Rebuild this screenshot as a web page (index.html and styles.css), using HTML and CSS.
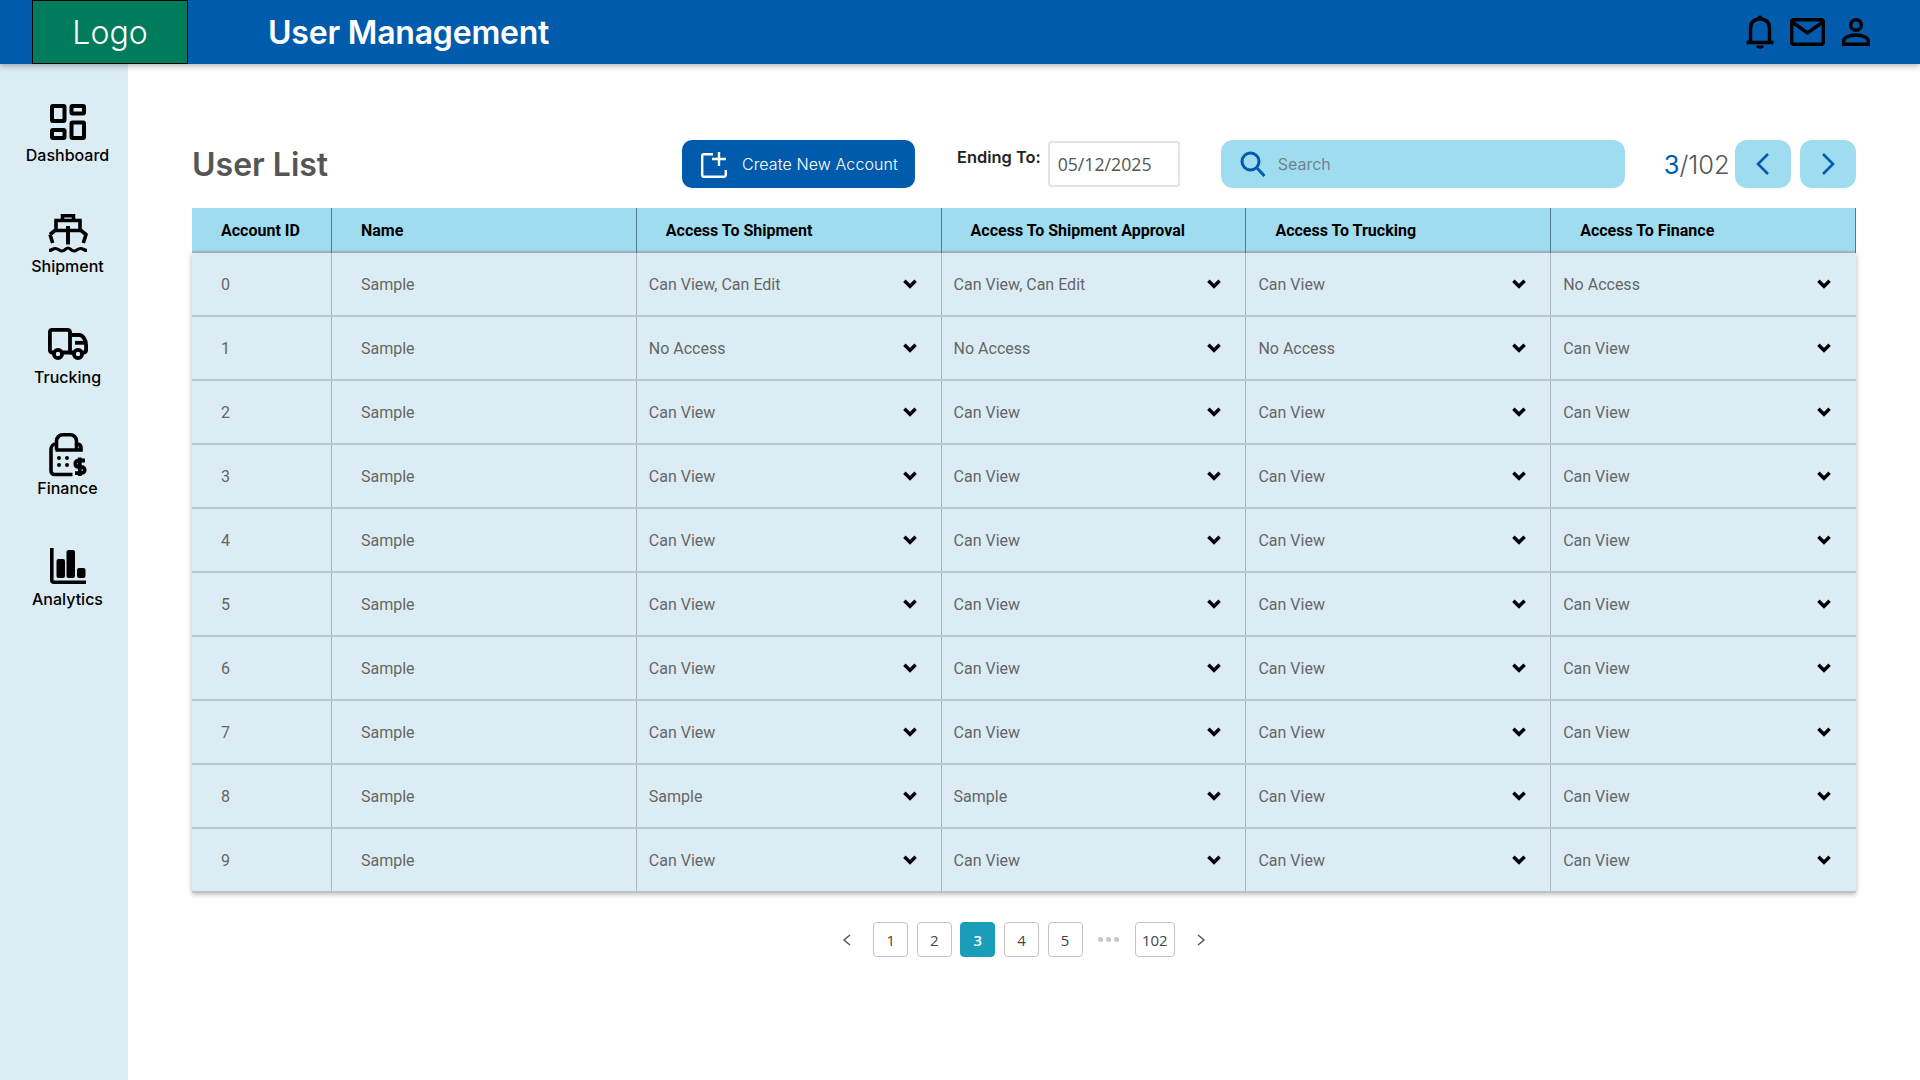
FILE: index.html
```html
<!DOCTYPE html>
<html lang="en">
<head>
<meta charset="utf-8">
<title>User Management</title>
<link rel="stylesheet" href="styles.css">
</head>
<body>
<svg class="defs" width="0" height="0" aria-hidden="true">
  <symbol id="chev" viewBox="0 0 14 10"><path d="M1.400 1.700 7 7.300l5.600-5.600" fill="none" stroke="#000" stroke-width="3.400"/></symbol>
</svg>
<header class="topbar">
  <div class="logo">Logo</div>
  <div class="app-title">User Management</div>
  <div class="top-icons">
    <svg class="i-bell" width="28" height="34" viewBox="0 0 28 34" fill="none" stroke="#000" stroke-width="3.400"><path d="M0.500 27.500h27M4.500 27V14C4.500 7.500 8 4 14 4s9.500 3.500 9.500 10v13"/><circle cx="14" cy="2.500" r="2" fill="#000" stroke="none"/><path d="M10 30.500h8l-1 2.500-3 1-3-1z" fill="#000" stroke="none"/></svg>
    <svg class="i-mail" width="35" height="28" viewBox="0 0 35 28" fill="none" stroke="#000" stroke-width="3.400"><rect x="1.700" y="1.700" width="31.600" height="24.600" rx="2"/><path d="M2 4l15.500 11L33 4"/></svg>
    <svg class="i-user" width="28" height="28" viewBox="0 0 28 28" fill="none" stroke="#000" stroke-width="3.400"><circle cx="14" cy="7" r="5.300"/><path d="M1.700 26.300V23c0-3.500 5.500-6 12.300-6s12.300 2.500 12.300 6v3.300z"/></svg>
  </div>
</header>
<div class="body-wrap">
  <nav class="sidebar">
    <div class="nav-item">
      <div class="nav-icon"><svg width="36" height="36" viewBox="0 0 36 36" fill="none" stroke="#000" stroke-width="4"><rect x="2" y="2" width="12.500" height="15" rx="1"/><rect x="21.500" y="2" width="12.500" height="7.500" rx="1"/><rect x="2" y="26" width="12.500" height="8" rx="1"/><rect x="21.500" y="18.500" width="12.500" height="15.500" rx="1"/></svg></div>
      <span>Dashboard</span>
    </div>
    <div class="nav-item">
      <div class="nav-icon"><svg width="40" height="39" viewBox="0 0 40 39" fill="none" stroke="#000" stroke-width="3.600"><path d="M14.500 6V1.800h11V6"/><path d="M8 16V6.500h24V16"/><path d="M2 20.500 7 16.500h26l5 4-2.700 8.500M2 20.500l2.700 8.500" stroke-linejoin="round"/><path d="M20 12v18.500" stroke-width="4"/><path d="M1 36.500c3 0 3.500-2 6.500-2s3.500 2.500 6.500 2.500 3.500-3 6-3 3 3 6 3 3.500-2.500 6.500-2.500 3.500 2 6.500 2" stroke-width="3.200"/></svg></div>
      <span>Shipment</span>
    </div>
    <div class="nav-item">
      <div class="nav-icon"><svg width="40" height="32" viewBox="0 0 40 32" fill="none" stroke="#000" stroke-width="3.800"><path d="M5.500 24.500H4A2.200 2.200 0 0 1 1.900 22V4A2.200 2.200 0 0 1 4 1.900h15.500A2.500 2.500 0 0 1 22 4v20.500h-7"/><path d="M22 7h9.500c3 0 6.600 5 6.600 10v5a2.200 2.200 0 0 1-2.100 2.500h-1.500M25.500 24.500h-3.500"/><path d="M27 14.800h11"/><circle cx="10" cy="26" r="4.100"/><circle cx="30" cy="26" r="4.100"/></svg></div>
      <span>Trucking</span>
    </div>
    <div class="nav-item">
      <div class="nav-icon"><svg width="38" height="44" viewBox="0 0 38 44" fill="none" stroke="#000" stroke-width="3.600"><path d="M7.500 17V8a6.200 6.200 0 0 1 6.200-6.200h7.600A6.200 6.200 0 0 1 27.500 8v9"/><path d="M6.500 17h25.500v-2a4 4 0 0 0-3-4"/><path d="M7 11a5 5 0 0 0-5 5v22a3.500 3.500 0 0 0 3.500 3.500h18"/><g fill="#000" stroke="none"><circle cx="10" cy="25" r="2"/><circle cx="18" cy="25" r="2"/><circle cx="10" cy="32" r="2"/><circle cx="18" cy="32" r="2"/></g><path d="M36 27.500h-7a3.200 3.200 0 0 0 0 6.300h3.500a3.200 3.200 0 0 1 0 6.400H26M30.800 24.500v18.500" stroke-width="3.800"/></svg></div>
      <span>Finance</span>
    </div>
    <div class="nav-item">
      <div class="nav-icon"><svg width="36" height="36" viewBox="0 0 36 36" fill="none"><path d="M1.800 0v32a2.200 2.200 0 0 0 2.200 2.200h32" stroke="#000" stroke-width="3.600"/><g fill="#000"><rect x="6.500" y="11" width="8.500" height="19" rx="2"/><rect x="16.500" y="2" width="8.500" height="28" rx="2"/><rect x="27" y="20" width="8.500" height="10" rx="2"/></g></svg></div>
      <span>Analytics</span>
    </div>
  </nav>
  <main class="content">
    <div class="toolbar">
      <h1 class="page-title">User List</h1>
      <button class="create-btn">
        <svg width="26" height="28" viewBox="0 0 26 28" fill="none" stroke="#fff" stroke-width="2.400"><path d="M12 4.200H3A1.800 1.800 0 0 0 1.200 6v19A1.800 1.800 0 0 0 3 26.800h20a1.800 1.800 0 0 0 1.800-1.800v-5"/><path d="M18 2v14M11 9h14"/></svg>
        Create New Account
      </button>
      <div class="ending-label">Ending To:</div>
      <div class="date-box">05/12/2025</div>
      <div class="search">
        <svg width="26" height="26" viewBox="0 0 26 26" fill="none" stroke="#005BAC" stroke-width="3"><circle cx="10.500" cy="10.500" r="8.500"/><path d="m16.500 16.500 8 8.500"/></svg>
        <span>Search</span>
      </div>
      <div class="page-count"><b>3</b>/102</div>
      <button class="nav-btn"><svg width="14" height="24" viewBox="0 0 14 24" fill="none" stroke="#005BAC" stroke-width="2.600"><path d="M12 2 2 12l10 10"/></svg></button>
      <button class="nav-btn"><svg width="14" height="24" viewBox="0 0 14 24" fill="none" stroke="#005BAC" stroke-width="2.600"><path d="m2 2 10 10L2 22"/></svg></button>
    </div>
    <div class="table">
      <div class="row head">
        <div class="cell id">Account ID</div>
        <div class="cell name">Name</div>
        <div class="cell name">Access To Shipment</div>
        <div class="cell name">Access To Shipment Approval</div>
        <div class="cell name">Access To Trucking</div>
        <div class="cell name">Access To Finance</div>
      </div>
      <div class="rows">
        <div class="row">
          <div class="cell id">0</div><div class="cell name">Sample</div>
          <div class="cell pick">Can View, Can Edit<svg><use href="#chev"/></svg></div>
          <div class="cell pick">Can View, Can Edit<svg><use href="#chev"/></svg></div>
          <div class="cell pick">Can View<svg><use href="#chev"/></svg></div>
          <div class="cell pick">No Access<svg><use href="#chev"/></svg></div>
        </div>
        <div class="row">
          <div class="cell id">1</div><div class="cell name">Sample</div>
          <div class="cell pick">No Access<svg><use href="#chev"/></svg></div>
          <div class="cell pick">No Access<svg><use href="#chev"/></svg></div>
          <div class="cell pick">No Access<svg><use href="#chev"/></svg></div>
          <div class="cell pick">Can View<svg><use href="#chev"/></svg></div>
        </div>
        <div class="row">
          <div class="cell id">2</div><div class="cell name">Sample</div>
          <div class="cell pick">Can View<svg><use href="#chev"/></svg></div>
          <div class="cell pick">Can View<svg><use href="#chev"/></svg></div>
          <div class="cell pick">Can View<svg><use href="#chev"/></svg></div>
          <div class="cell pick">Can View<svg><use href="#chev"/></svg></div>
        </div>
        <div class="row">
          <div class="cell id">3</div><div class="cell name">Sample</div>
          <div class="cell pick">Can View<svg><use href="#chev"/></svg></div>
          <div class="cell pick">Can View<svg><use href="#chev"/></svg></div>
          <div class="cell pick">Can View<svg><use href="#chev"/></svg></div>
          <div class="cell pick">Can View<svg><use href="#chev"/></svg></div>
        </div>
        <div class="row">
          <div class="cell id">4</div><div class="cell name">Sample</div>
          <div class="cell pick">Can View<svg><use href="#chev"/></svg></div>
          <div class="cell pick">Can View<svg><use href="#chev"/></svg></div>
          <div class="cell pick">Can View<svg><use href="#chev"/></svg></div>
          <div class="cell pick">Can View<svg><use href="#chev"/></svg></div>
        </div>
        <div class="row">
          <div class="cell id">5</div><div class="cell name">Sample</div>
          <div class="cell pick">Can View<svg><use href="#chev"/></svg></div>
          <div class="cell pick">Can View<svg><use href="#chev"/></svg></div>
          <div class="cell pick">Can View<svg><use href="#chev"/></svg></div>
          <div class="cell pick">Can View<svg><use href="#chev"/></svg></div>
        </div>
        <div class="row">
          <div class="cell id">6</div><div class="cell name">Sample</div>
          <div class="cell pick">Can View<svg><use href="#chev"/></svg></div>
          <div class="cell pick">Can View<svg><use href="#chev"/></svg></div>
          <div class="cell pick">Can View<svg><use href="#chev"/></svg></div>
          <div class="cell pick">Can View<svg><use href="#chev"/></svg></div>
        </div>
        <div class="row">
          <div class="cell id">7</div><div class="cell name">Sample</div>
          <div class="cell pick">Can View<svg><use href="#chev"/></svg></div>
          <div class="cell pick">Can View<svg><use href="#chev"/></svg></div>
          <div class="cell pick">Can View<svg><use href="#chev"/></svg></div>
          <div class="cell pick">Can View<svg><use href="#chev"/></svg></div>
        </div>
        <div class="row">
          <div class="cell id">8</div><div class="cell name">Sample</div>
          <div class="cell pick">Sample<svg><use href="#chev"/></svg></div>
          <div class="cell pick">Sample<svg><use href="#chev"/></svg></div>
          <div class="cell pick">Can View<svg><use href="#chev"/></svg></div>
          <div class="cell pick">Can View<svg><use href="#chev"/></svg></div>
        </div>
        <div class="row">
          <div class="cell id">9</div><div class="cell name">Sample</div>
          <div class="cell pick">Can View<svg><use href="#chev"/></svg></div>
          <div class="cell pick">Can View<svg><use href="#chev"/></svg></div>
          <div class="cell pick">Can View<svg><use href="#chev"/></svg></div>
          <div class="cell pick">Can View<svg><use href="#chev"/></svg></div>
        </div>
      </div>
    </div>
    <div class="pager">
      <svg class="pg-arrow" width="10" height="12" viewBox="0 0 10 12" fill="none" stroke="#555" stroke-width="1.500"><path d="M8 1 2 6l6 5"/></svg>
      <div class="pg">1</div>
      <div class="pg">2</div>
      <div class="pg on">3</div>
      <div class="pg">4</div>
      <div class="pg">5</div>
      <div class="pg-dots"><i></i><i></i><i></i></div>
      <div class="pg wide">102</div>
      <svg class="pg-arrow" width="10" height="12" viewBox="0 0 10 12" fill="none" stroke="#555" stroke-width="1.500"><path d="m2 1 6 5-6 5"/></svg>
    </div>
  </main>
</div>
</body>
</html>
```
FILE: styles.css
```css
* { box-sizing: border-box; }
html, body { margin: 0; padding: 0; }
body {
  width: 1920px;
  height: 1080px;
  overflow: hidden;
  background: #fff;
  font-family: Inter, "Liberation Sans", sans-serif;
  font-size: 16px;
  color: #000;
}
.defs { display: block; height: 0; }

.topbar {
  position: relative;
  z-index: 2;
  height: 64px;
  display: flex;
  align-items: center;
  background: #005bac;
  box-shadow: 0 2px 6px rgba(0, 0, 0, 0.3);
}
.logo {
  width: 156px;
  height: 64px;
  margin-left: 32px;
  border: 1px solid #000;
  background: #007c5c;
  color: #fff;
  font-size: 32px;
  font-weight: 300;
  display: flex;
  align-items: center;
  justify-content: center;
}
.app-title {
  margin-left: 80px;
  color: #fff;
  font-size: 32px;
  font-weight: 600;
  letter-spacing: -0.2px;
}
.top-icons {
  margin-left: auto;
  margin-right: 50px;
  display: flex;
  align-items: center;
  gap: 17px;
}
.i-bell { margin: -1px -1px 0 0; }

.body-wrap {
  display: flex;
  height: 1016px;
}
.sidebar {
  width: 128px;
  flex: none;
  background: #dcecf4;
  padding: 36px 0 0 7px;
  display: flex;
  flex-direction: column;
  gap: 45px;
}
.nav-item {
  height: 66px;
  display: flex;
  flex-direction: column;
  align-items: center;
  font-size: 16px;
  font-weight: 500;
  line-height: 22px;
}
.nav-icon {
  height: 44px;
  display: flex;
  align-items: center;
  justify-content: center;
}

.content {
  flex: 1;
  padding: 76px 64px 0;
}
.toolbar {
  height: 48px;
  display: flex;
  align-items: center;
  margin-bottom: 20px;
}
.page-title {
  width: 490px;
  margin: 0;
  color: #555;
  font-size: 32px;
  font-weight: 600;
}
.create-btn {
  width: 233px;
  height: 48px;
  border: 0;
  border-radius: 10px;
  background: #005bac;
  color: #fff;
  font: 300 16px Inter, sans-serif;
  letter-spacing: 0.1px;
  display: flex;
  align-items: center;
  gap: 15px;
  padding: 0 0 0 19px;
}
.ending-label {
  margin-left: 42px;
  padding-bottom: 14px;
  font-size: 16.400px;
  font-weight: 600;
  color: #222;
}
.date-box {
  width: 132px;
  height: 46px;
  margin-left: 7px;
  border: 2px solid #e1e4ea;
  border-radius: 4px;
  padding-left: 8px;
  display: flex;
  align-items: center;
  font-family: "Open Sans", sans-serif;
  font-size: 17.700px;
  color: #555;
}
.search {
  width: 404px;
  height: 48px;
  margin-left: 41px;
  border-radius: 12px;
  background: #a0dcef;
  display: flex;
  align-items: center;
  gap: 12px;
  padding-left: 19px;
  color: #6f8492;
}
.page-count {
  margin-left: 39px;
  width: 71px;
  font-size: 25.500px;
  font-weight: 300;
  color: #555;
  white-space: nowrap;
}
.page-count b { font-weight: 400; color: #005bac; }
.nav-btn {
  width: 56px;
  height: 48px;
  padding: 0;
  border: 0;
  border-radius: 12px;
  background: #a0dcef;
  display: flex;
  align-items: center;
  justify-content: center;
}
.nav-btn + .nav-btn { margin-left: 9px; }

.table { font-family: Roboto, "Liberation Sans", sans-serif; }
.row {
  display: grid;
  grid-template-columns: 140px repeat(4, 304.800px) 1fr;
  height: 64px;
  background: #dcecf4;
  border-bottom: 2px solid #bcc5ca;
}
.cell {
  display: flex;
  align-items: center;
  border-right: 1px solid #aab4b9;
  color: #666;
  min-width: 0;
}
.cell:last-child { border-right: 0; }
.cell.id { padding-left: 29px; }
.cell.name { padding-left: 29px; }
.cell.pick {
  padding: 0 24px 0 12px;
  justify-content: space-between;
}
.cell.pick:last-child { padding-right: 25px; }
.cell.pick svg { width: 14px; height: 10px; flex: none; }
.row.head {
  height: 45px;
  background: #a0dcef;
  border-bottom: 0;
  box-shadow: inset 0 -2px 0 #a5c0cb;
  border-right: 1px solid #4d7c8e;
}
.row.head .cell {
  color: #000;
  font-size: 16px;
  font-weight: 700;
  border-right-color: #4d7c8e;
}
.rows {
  box-shadow: 0 1px 5px rgba(0, 0, 0, 0.3);
}

.pager {
  margin-top: 29px;
  display: flex;
  align-items: center;
  justify-content: center;
  gap: 8.600px;
  font-family: "Open Sans", sans-serif;
  font-size: 15px;
  color: #444;
}
.pg-arrow { margin: 0 13px; }
.pg {
  width: 35px;
  height: 35px;
  border: 1.500px solid #c4c4c4;
  border-radius: 4px;
  display: flex;
  align-items: center;
  justify-content: center;
}
.pg.on {
  background: #1a9db8;
  border-color: #1a9db8;
  color: #fff;
  font-weight: 600;
}
.pg.wide { width: 40px; }
.pg-dots {
  width: 35px;
  display: flex;
  justify-content: center;
  gap: 3px;
}
.pg-dots i {
  width: 5px;
  height: 5px;
  border-radius: 50%;
  background: #c4c8cc;
}
```
